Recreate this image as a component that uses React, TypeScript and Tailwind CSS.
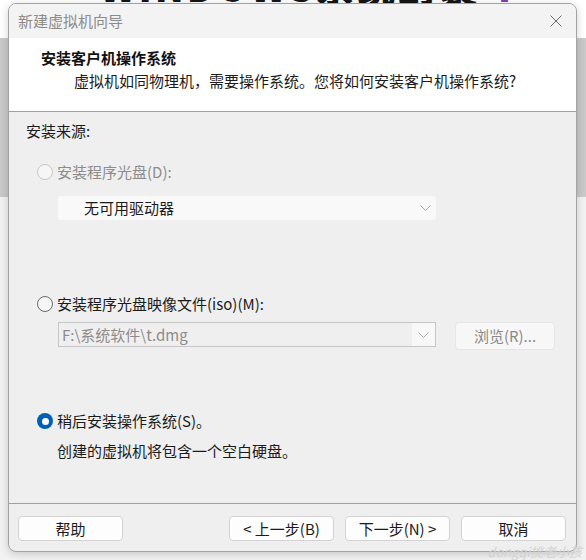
import React from 'react'

const Radio = ({ state }: { state: 'disabled' | 'off' | 'on' }) => {
  if (state === 'on') {
    return (
      <span className="w-[16px] h-[16px] rounded-full bg-[#005fb8] flex items-center justify-center shrink-0">
        <span className="w-[7px] h-[7px] rounded-full bg-white" />
      </span>
    )
  }
  return (
    <span
      className={
        state === 'disabled'
          ? 'w-[16px] h-[16px] rounded-full border border-[#c8c8c8] bg-[#f6f6f6] shrink-0'
          : 'w-[16px] h-[16px] rounded-full border border-[#6b6b6b] bg-[#f6f6f6] shrink-0'
      }
    />
  )
}

const Chevron = () => (
  <svg width="11" height="6" viewBox="0 0 11 6" fill="none">
    <polyline points="0.5,0.5 5.5,5.5 10.5,0.5" stroke="#a9a9a9" strokeWidth="1" />
  </svg>
)

const Btn = ({ label }: { label: string }) => (
  <div className="w-[105px] h-[25px] bg-[#fdfdfd] border border-[#d3d3d3] rounded-[4px] flex items-center justify-center text-[15px] leading-none text-[#1b1b1b]">
    {label}
  </div>
)

export default function App() {
  return (
    <div className="relative w-[586px] h-[560px] overflow-hidden flex flex-col bg-[#f1f1f1] font-['Noto_Sans_CJK_SC',sans-serif]">
      {/* window behind the dialog */}
      <div className="h-[38px] bg-white overflow-hidden">
        <div className="-mt-[33px] ml-[100px] flex items-start gap-[14px] whitespace-nowrap">
          <span className="text-[38px] leading-[38px] font-black text-[#151515] tracking-[3px]">WINDOWS系统封装</span>
          <span className="text-[38px] leading-[38px] font-black text-[#7b3fb8]">7</span>
        </div>
      </div>
      <div className="h-[159px] bg-[#c9c9c9]" />
      <div className="flex-1 bg-[#f2f2f2]" />

      {/* dialog */}
      <div className="absolute left-[8px] top-[3px] w-[569px] h-[549px] flex flex-col rounded-[8px] border border-[#a3a3a3] bg-[#efefef] shadow-[0_2px_8px_rgba(0,0,0,0.18)] overflow-hidden">
        <div className="h-[34px] bg-[#f3f3f3] flex items-center justify-between pl-[9px] pr-[14px]">
          <span className="text-[15px] leading-[20px] text-[#8b8b8b]">新建虚拟机向导</span>
          <svg width="12" height="12" viewBox="0 0 12 12" fill="none">
            <path d="M0.5 0.5 L11.5 11.5 M11.5 0.5 L0.5 11.5" stroke="#6a6a6a" strokeWidth="1" />
          </svg>
        </div>

        <div className="h-[74px] bg-white border-b border-[#a0a0a0] pl-[32px] pt-[10px]">
          <div className="text-[15px] leading-[20px] font-bold text-[#111]">安装客户机操作系统</div>
          <div className="mt-[3px] ml-[33px] text-[15px] leading-[20px] text-[#1b1b1b]">
            虚拟机如同物理机，需要操作系统。您将如何安装客户机操作系统?
          </div>
        </div>

        <div className="h-[392px] border-b border-[#a0a0a0] pl-[17px] text-[15px] leading-[20px] text-[#1b1b1b]">
          <div className="mt-[9px]">安装来源:</div>

          <div className="mt-[21px] ml-[11px] flex items-center gap-[4px] h-[20px] text-[#8c8c8c]">
            <Radio state="disabled" />
            <span>安装程序光盘(D):</span>
          </div>
          <div className="mt-[14px] ml-[32px] w-[378px] h-[24px] bg-[#f9f9f9] rounded-[3px] flex items-center justify-between pl-[26px] pr-[5px]">
            <span>无可用驱动器</span>
            <Chevron />
          </div>

          <div className="mt-[74px] ml-[11px] flex items-center gap-[4px] h-[20px]">
            <Radio state="off" />
            <span>安装程序光盘映像文件(iso)(M):</span>
          </div>
          <div className="mt-[8px] ml-[32px] flex items-start gap-[19px]">
            <div className="w-[378px] h-[25px] border border-[#c6c6c6] bg-[#efefef] flex">
              <div className="flex-1 pl-[3px] flex items-center text-[#8c8c8c]">F:\系统软件\t.dmg</div>
              <div className="w-[23px] bg-[#f8f8f8] flex items-center justify-center">
                <Chevron />
              </div>
            </div>
            <div className="w-[100px] h-[28px] bg-[#f7f7f7] border border-[#e6e6e6] rounded-[4px] flex items-center justify-center text-[#8a8a8a]">
              浏览(R)...
            </div>
          </div>

          <div className="mt-[61px] ml-[11px] flex items-center gap-[4px] h-[20px]">
            <Radio state="on" />
            <span>稍后安装操作系统(S)。</span>
          </div>
          <div className="mt-[10px] ml-[31px]">创建的虚拟机将包含一个空白硬盘。</div>
        </div>

        <div className="flex-1 flex items-start justify-between pt-[12px] pl-[9px] pr-[10px]">
          <Btn label="帮助" />
          <div className="flex gap-[11px]">
            <Btn label="< 上一步(B)" />
            <Btn label="下一步(N) >" />
            <Btn label="取消" />
          </div>
        </div>
      </div>

      <div className="absolute right-[4px] bottom-[0px] text-[13px] leading-[16px] italic text-[#d2d2d2] whitespace-nowrap">
        dongqi挑老小孩
      </div>
    </div>
  )
}
